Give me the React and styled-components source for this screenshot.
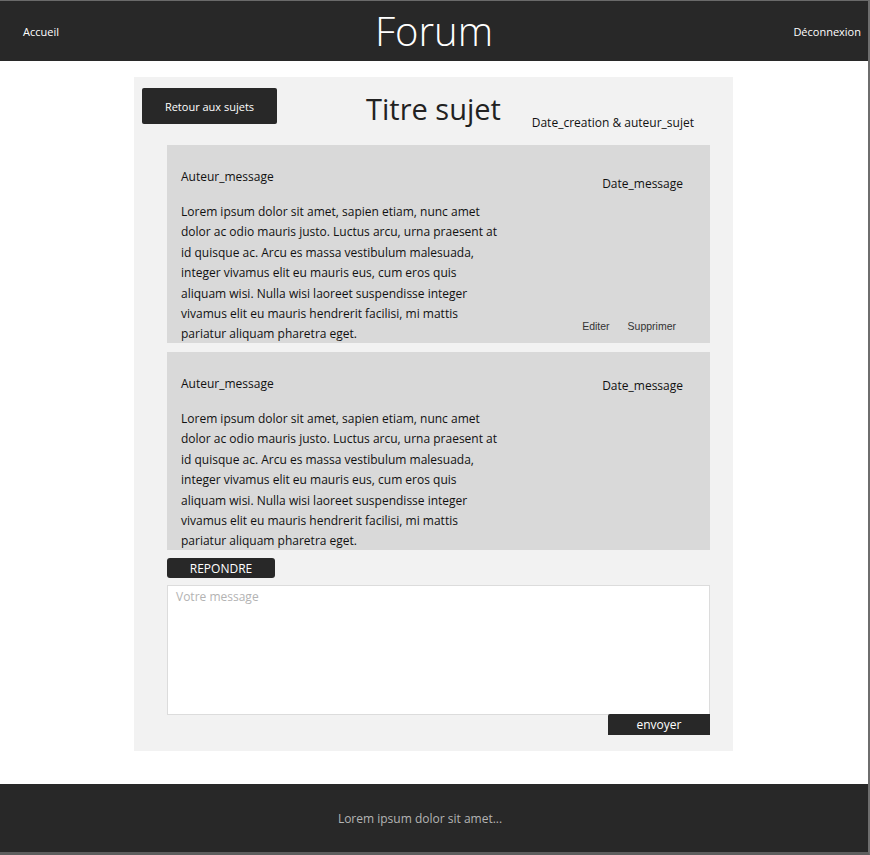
import styled, {createGlobalStyle} from 'styled-components';

const colors = {
  dark: '#282828',
  panel: '#f2f2f2',
  card: '#d9d9d9',
  frame: '#5e5e5e',
};

const GlobalStyle = createGlobalStyle`
  html, body {
    margin: 0;
    padding: 0;
    background: #ffffff;
  }
  * {
    box-sizing: border-box;
  }
  body {
    font-family: "Open Sans", "DejaVu Sans", sans-serif;
    color: #111;
  }
`;

const Page = styled.div`
  display: flex;
  flex-direction: column;
  height: 855px;
  border-top: 1px solid #6a6a6a;
  border-right: 2px solid #6e6e6e;
  border-bottom: 3px solid ${colors.frame};
`;

const Header = styled.header`
  display: grid;
  grid-template-columns: 1fr auto 1fr;
  align-items: center;
  height: 60px;
  padding: 0 7px;
  background-color: ${colors.dark};
  color: #ffffff;
`;

const NavLink = styled.a`
  font-size: 11px;
  color: #ffffff;
  text-decoration: none;
  justify-self: ${(props) => (props.$right ? 'end' : 'start')};
  margin-left: ${(props) => (props.$right ? '0' : '16px')};
  margin-top: 1px;
`;

const Logo = styled.h1`
  margin: 0;
  font-size: 40px;
  font-weight: 300;
  line-height: 1;
  margin-top: -1px;
`;

const Main = styled.main`
  flex: 1;
  display: flex;
  justify-content: center;
  align-items: flex-start;
  padding-top: 16px;
`;

const Panel = styled.section`
  display: flex;
  flex-direction: column;
  width: 599px;
  margin-right: 1px;
  padding: 11px 23px 16px 8px;
  background-color: ${colors.panel};
`;

const TopRow = styled.div`
  display: grid;
  grid-template-columns: 1fr auto 1fr;
  align-items: start;
  margin-right: -15px;
`;

const Button = styled.button`
  border: none;
  border-radius: 3px;
  background-color: ${colors.dark};
  color: #ffffff;
  font-family: "Open Sans", "DejaVu Sans", sans-serif;
  cursor: pointer;
  padding: 0;
`;

const BackButton = styled(Button)`
  justify-self: start;
  width: 135px;
  height: 36px;
  font-size: 11px;
  border-radius: 2px;
`;

const Title = styled.h2`
  margin: 0;
  font-size: 29px;
  font-weight: 400;
  line-height: 41px;
  color: #222;
`;

const TopicMeta = styled.span`
  justify-self: end;
  align-self: end;
  margin-right: 31px;
  margin-bottom: -2px;
  font-size: 12px;
  line-height: 17px;
`;

const Thread = styled.div`
  display: flex;
  flex-direction: column;
  gap: 9px;
  margin: 16px 0 0 25px;
`;

const Card = styled.article`
  display: grid;
  grid-template-columns: 1fr auto;
  height: 198px;
  overflow: hidden;
  padding: 23px 0 0 13px;
  background-color: ${colors.card};
`;

const MessageBody = styled.div`
  display: flex;
  flex-direction: column;
`;

const Author = styled.span`
  font-size: 12px;
  line-height: 18px;
  margin-left: 1px;
`;

const Text = styled.p`
  width: 318px;
  margin: 16px 0 0 1px;
  font-size: 12px;
  line-height: 20.4px;
`;

const Side = styled.div`
  display: flex;
  flex-direction: column;
  justify-content: space-between;
  align-items: flex-end;
  padding: ${(props) => props.$dateOffset}px 27px 13px 0;
`;

const DateText = styled.span`
  font-size: 12px;
  line-height: 18px;
`;

const Actions = styled.div`
  display: flex;
  gap: 18px;
  margin-right: 7px;
`;

const ActionLink = styled.a`
  font-family: "Liberation Sans", Arial, sans-serif;
  font-size: 10.5px;
  color: #333;
  text-decoration: none;
  cursor: pointer;
`;

const ReplyArea = styled.div`
  display: flex;
  flex-direction: column;
  margin: 8px 0 0 25px;
`;

const ReplyButton = styled(Button)`
  align-self: flex-start;
  width: 108px;
  height: 20px;
  font-size: 12px;
`;

const MessageInput = styled.textarea`
  display: block;
  height: 130px;
  margin-top: 7px;
  padding: 2px 8px;
  border: 1px solid #dcdcdc;
  resize: none;
  background: #ffffff;
  font-family: "Open Sans", "DejaVu Sans", sans-serif;
  font-size: 12px;
  line-height: 17px;
  &::placeholder {
    color: #b3b3b3;
  }
`;

const SendButton = styled(Button)`
  align-self: flex-end;
  width: 102px;
  height: 21px;
  margin-top: -1px;
  font-size: 12px;
  border-radius: 2px 0 0 0;
`;

const Footer = styled.footer`
  display: flex;
  justify-content: center;
  align-items: center;
  height: 68px;
  padding-right: 28px;
  background-color: ${colors.dark};
  color: #b4b4b4;
  font-size: 12px;
`;

const lorem =
  'Lorem ipsum dolor sit amet, sapien etiam, nunc amet dolor ac odio mauris justo. Luctus arcu, urna praesent at id quisque ac. Arcu es massa vestibulum malesuada, integer vivamus elit eu mauris eus, cum eros quis aliquam wisi. Nulla wisi laoreet suspendisse integer vivamus elit eu mauris hendrerit facilisi, mi mattis pariatur aliquam pharetra eget.';

const messages = [
  {id: 1, author: 'Auteur_message', date: 'Date_message', text: lorem, editable: true, dateOffset: 7},
  {id: 2, author: 'Auteur_message', date: 'Date_message', text: lorem, editable: false, dateOffset: 2},
];

const Message = ({message}) => {
  return (
    <Card>
      <MessageBody>
        <Author>{message.author}</Author>
        <Text>{message.text}</Text>
      </MessageBody>
      <Side $dateOffset={message.dateOffset}>
        <DateText>{message.date}</DateText>
        {message.editable && (
          <Actions>
            <ActionLink>Editer</ActionLink>
            <ActionLink>Supprimer</ActionLink>
          </Actions>
        )}
      </Side>
    </Card>
  );
};

const App = () => {
  return (
    <>
      <GlobalStyle />
      <Page>
        <Header>
          <NavLink href="#">Accueil</NavLink>
          <Logo>Forum</Logo>
          <NavLink href="#" $right>
            Déconnexion
          </NavLink>
        </Header>
        <Main>
          <Panel>
            <TopRow>
              <BackButton>Retour aux sujets</BackButton>
              <Title>Titre sujet</Title>
              <TopicMeta>Date_creation &amp; auteur_sujet</TopicMeta>
            </TopRow>
            <Thread>
              {messages.map((message) => (
                <Message key={message.id} message={message} />
              ))}
            </Thread>
            <ReplyArea>
              <ReplyButton>REPONDRE</ReplyButton>
              <MessageInput placeholder="Votre message" />
              <SendButton>envoyer</SendButton>
            </ReplyArea>
          </Panel>
        </Main>
        <Footer>Lorem ipsum dolor sit amet...</Footer>
      </Page>
    </>
  );
};

export default App;
